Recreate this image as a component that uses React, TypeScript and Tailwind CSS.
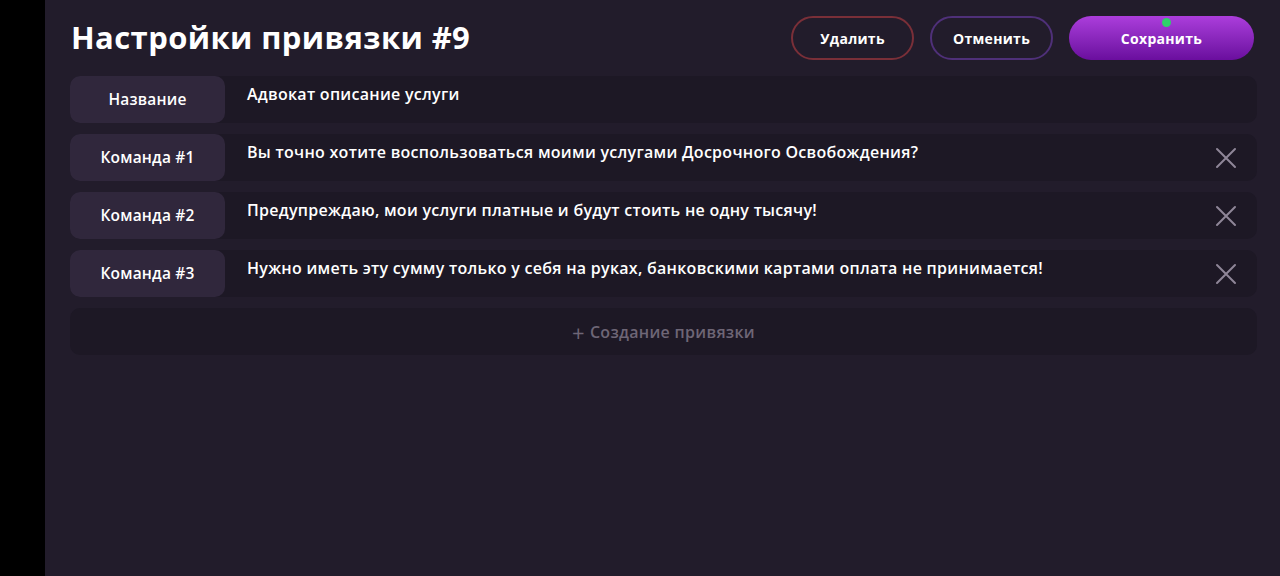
const rows = [
  { label: "Название", text: "Адвокат описание услуги", removable: false },
  { label: "Команда #1", text: "Вы точно хотите воспользоваться моими услугами Досрочного Освобождения?", removable: true },
  { label: "Команда #2", text: "Предупреждаю, мои услуги платные и будут стоить не одну тысячу!", removable: true },
  { label: "Команда #3", text: "Нужно иметь эту сумму только у себя на руках, банковскими картами оплата не принимается!", removable: true },
];

function CloseIcon() {
  return (
    <svg width="22" height="22" viewBox="0 0 22 22" fill="none" stroke="#8f8698" strokeWidth="2" strokeLinecap="round">
      <path d="M2 2 L20 20 M20 2 L2 20" />
    </svg>
  );
}

function BindingRow({ label, text, removable }: { label: string; text: string; removable: boolean }) {
  return (
    <div className="flex h-[47px] rounded-[10px] bg-[#1d1825]">
      <div className="flex w-[155px] shrink-0 items-center justify-center rounded-[10px] bg-[#30273c] text-[15.5px] font-semibold tracking-[0.2px] text-white">
        {label}
      </div>
      <div className="flex-1 pl-[22px] pt-[6px] text-[16px] font-semibold tracking-[0.28px] text-white">{text}</div>
      {removable && (
        <div className="flex w-[62px] items-center justify-center">
          <CloseIcon />
        </div>
      )}
    </div>
  );
}

export default function App() {
  return (
    <div className="flex h-[576px] w-[1280px] font-['Open_Sans',sans-serif]">
      <div className="w-[45px] shrink-0 bg-black" />
      <div className="flex-1 bg-[#221c2b] pl-[25px] pr-[23px]">
        <div className="flex h-[76px] items-center justify-between">
          <h1 className="pb-[1px] pl-[1px] text-[31px] font-bold tracking-[0.4px] text-white">Настройки привязки #9</h1>
          <div className="flex gap-4 pr-[3px]">
            <button className="h-[44px] w-[123px] rounded-full border-2 border-[#7a2f38] text-[14px] font-bold tracking-[0.3px] text-white">
              Удалить
            </button>
            <button className="h-[44px] w-[123px] rounded-full border-2 border-[#4f3079] text-[14px] font-bold tracking-[0.3px] text-white">
              Отменить
            </button>
            <button className="relative h-[44px] w-[185px] rounded-full bg-gradient-to-b from-[#ac3ddc] to-[#6a0d9e] text-[14px] font-bold tracking-[0.3px] text-white">
              Сохранить
              <span className="absolute left-[93px] top-[2px] h-[9px] w-[9px] rounded-full bg-[#2fd06b]" />
            </button>
          </div>
        </div>
        <div className="flex flex-col gap-[11px]">
          {rows.map((r) => (
            <BindingRow key={r.label} {...r} />
          ))}
          <div className="flex h-[47px] items-center justify-center rounded-[10px] bg-[#1d1825] text-[16px] font-semibold tracking-[0.3px] text-[#6e6676]">
            <span className="mr-[5px] text-[22px] font-normal leading-none">+</span>Создание привязки
          </div>
        </div>
      </div>
    </div>
  );
}
